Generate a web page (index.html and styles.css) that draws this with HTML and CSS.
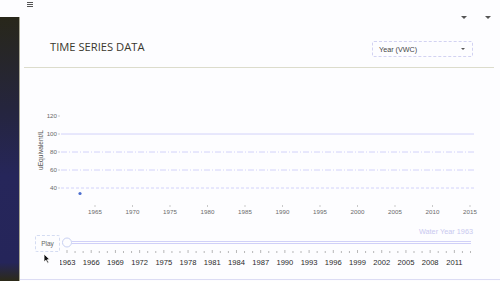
FILE: index.html
```html
<!DOCTYPE html>
<html lang="en">
<head>
    <meta charset="UTF-8">
    <meta name="viewport" content="width=device-width, initial-scale=1.0">
    <title>Time Series Data</title>
    <link rel="stylesheet" href="styles.css">
</head>
<body>
<div class="page">
    <aside class="sidebar"></aside>

    <main class="main">
        <div class="topbar">
            <span class="menu-icon">
                <span></span><span></span><span></span>
            </span>
            <div class="user-nav">
                <span class="caret"></span>
                <span class="caret"></span>
            </div>
        </div>

        <div class="panel-header">
            <h1 class="panel-title">TIME SERIES DATA</h1>
            <div class="select-box">
                <span>Year (VWC)</span>
                <span class="caret small"></span>
            </div>
        </div>
        <div class="panel-rule"></div>

        <!-- chart -->
        <svg class="chart" width="480" height="154" viewBox="0 0 480 154">
            <text class="axis-title" transform="translate(23,82) rotate(-90)" text-anchor="middle">uEquivalent/L</text>

            <g class="y-ticks" text-anchor="end">
                <text x="37" y="50">120</text>
                <text x="37" y="68">100</text>
                <text x="37" y="86">80</text>
                <text x="37" y="104">60</text>
                <text x="37" y="122">40</text>
            </g>
            <g class="tick-marks">
                <line x1="38" y1="48" x2="40" y2="48"/>
                <line x1="38" y1="66" x2="40" y2="66"/>
                <line x1="38" y1="84" x2="40" y2="84"/>
                <line x1="38" y1="102" x2="40" y2="102"/>
                <line x1="38" y1="120" x2="40" y2="120"/>
            </g>

            <line class="grid" x1="41" y1="66" x2="454" y2="66"/>
            <line class="grid dashdot" x1="41" y1="84" x2="454" y2="84"/>
            <line class="grid dashdot" x1="41" y1="102" x2="454" y2="102"/>
            <line class="grid dashed" x1="41" y1="120" x2="454" y2="120"/>

            <circle class="point" cx="60" cy="125.5" r="1.6"/>

            <g id="xTicks" class="tick-marks"></g>
            <g id="xLabels" class="x-labels" text-anchor="middle"></g>
        </svg>

        <div class="slider-label">Water Year 1963</div>
        <div class="slider-row">
            <button class="play-btn">Play</button>
            <svg class="slider" width="420" height="33" viewBox="0 0 420 33">
                <line class="track" x1="12" y1="6.5" x2="411" y2="6.5"/>
                <line class="track" x1="12" y1="8.5" x2="411" y2="8.5"/>
                <circle class="handle" cx="7" cy="7.5" r="4.5"/>
                <g id="sliderTicks" class="slider-ticks"></g>
                <g id="sliderLabels" class="slider-labels" text-anchor="middle"></g>
            </svg>
        </div>

        <div class="panel-bottom"></div>

        <svg class="cursor" width="8" height="11" viewBox="0 0 8 11">
            <path d="M1 1 L1 9 L3 7.2 L4.6 10.2 L5.8 9.6 L4.3 6.7 L6.8 6.6 Z" fill="#111" stroke="#fff" stroke-width="0.8"/>
        </svg>
    </main>
</div>

<script>
    const SVG_NS = 'http://www.w3.org/2000/svg';

    function addEl(parent, tag, attrs, text) {
        const el = document.createElementNS(SVG_NS, tag);
        for (const key in attrs) {
            el.setAttribute(key, attrs[key]);
        }
        if (text) el.textContent = text;
        parent.appendChild(el);
    }

    // chart x axis, 1965 - 2015
    const xTicks = document.getElementById('xTicks');
    const xLabels = document.getElementById('xLabels');
    for (let i = 0; i <= 10; i++) {
        const x = 75 + i * 37.5;
        addEl(xTicks, 'line', { x1: x, y1: 137, x2: x, y2: 139 });
        addEl(xLabels, 'text', { x: x, y: 146 }, String(1965 + i * 5));
    }

    // slider ticks, one per year
    const sliderTicks = document.getElementById('sliderTicks');
    const sliderLabels = document.getElementById('sliderLabels');
    for (let i = 0; i <= 50; i++) {
        const x = 7 + i * 8.07;
        const major = i % 3 === 0;
        addEl(sliderTicks, 'line', { x1: x, y1: major ? 15 : 16, x2: x, y2: 18 });
        if (major && 1963 + i <= 2011) {
            addEl(sliderLabels, 'text', { x: x, y: 30 }, String(1963 + i));
        }
    }
</script>
</body>
</html>
```

FILE: styles.css
```css
body {
    margin: 0;
    background-color: #fdfdff;
    font-family: "Liberation Sans", Arial, sans-serif;
    color: #444;
}

.page {
    display: flex;
    height: 281px;
    overflow: hidden;
}

/* dark strip on the left */
.sidebar {
    width: 19px;
    margin-top: 17px;
    flex-shrink: 0;
    background: linear-gradient(to bottom, #28271a 0%, #25253e 35%, #26265a 60%, #25255a 93%, #2c2a18 100%);
    border-right: 1px solid #a9a897;
}

.main {
    flex: 1;
    display: flex;
    flex-direction: column;
    position: relative;
}

.topbar {
    height: 20px;
    display: flex;
    justify-content: space-between;
    padding: 0 9px 0 7px;
}

.menu-icon {
    display: flex;
    flex-direction: column;
    gap: 1px;
    width: 6px;
    margin-top: 2px;
}
.menu-icon span {
    height: 1px;
    background-color: #555;
}

.user-nav {
    display: flex;
    align-items: flex-end;
    gap: 18px;
    padding-bottom: 1px;
}

.caret {
    width: 0;
    height: 0;
    border-left: 3px solid transparent;
    border-right: 3px solid transparent;
    border-top: 3px solid #555;
}
.caret.small {
    border-left-width: 2.5px;
    border-right-width: 2.5px;
    border-top-width: 2.5px;
}

.panel-header {
    display: flex;
    justify-content: space-between;
    align-items: flex-start;
    margin-top: 21px;
    padding: 0 27px 0 30px;
}

.panel-title {
    margin: 0;
    font-family: "Open Sans", sans-serif;
    font-size: 11.2px;
    font-weight: 500;
    line-height: 12px;
    color: #3a382e;
}

.select-box {
    width: 86px;
    height: 14px;
    border: 1px dashed #d2d2f2;
    border-radius: 2px;
    display: flex;
    align-items: center;
    justify-content: space-between;
    padding: 0 7px 0 6px;
    font-size: 7.2px;
    color: #444;
}

.panel-rule {
    margin: 10px 6px 0 4px;
    border-top: 1px solid #dcdccc;
}

.chart {
    display: block;
}

.axis-title {
    font-size: 6.6px;
    fill: #555;
}
.y-ticks text, .x-labels text {
    font-size: 6.2px;
    fill: #6a6a6a;
}
.tick-marks line {
    stroke: #bbb;
    stroke-width: 0.8;
}

.grid {
    stroke: #d2d2fa;
    stroke-width: 1;
}
.grid.dashdot {
    stroke-dasharray: 6 2 1 2;
}
.grid.dashed {
    stroke-dasharray: 3 2;
}

.point {
    fill: #4d6fcf;
}

.slider-label {
    margin-top: 6px;
    padding-right: 27px;
    text-align: right;
    font-size: 7.3px;
    line-height: 8px;
    color: #c9c9ef;
}

.slider-row {
    display: flex;
    align-items: flex-start;
    padding-left: 15px;
    margin-top: -1px;
}

.play-btn {
    width: 25px;
    height: 17px;
    padding: 0;
    border: 1px dashed #d4dcf2;
    border-radius: 2px;
    background-color: #fdfdff;
    font-family: "Liberation Sans", Arial, sans-serif;
    font-size: 6.5px;
    color: #666;
}

.slider .track {
    stroke: #d0d0f8;
    stroke-width: 1;
}
.slider .handle {
    fill: #fdfdff;
    stroke: #c8d0f2;
    stroke-width: 1;
}
.slider-ticks line {
    stroke: #999;
    stroke-width: 0.7;
}
.slider-labels text {
    font-size: 7.6px;
    fill: #2a2a2a;
}

.panel-bottom {
    margin-top: auto;
    margin-bottom: 1px;
    border-top: 1px solid #dcdcf4;
}

.cursor {
    position: absolute;
    left: 23px;
    top: 253px;
}
```
